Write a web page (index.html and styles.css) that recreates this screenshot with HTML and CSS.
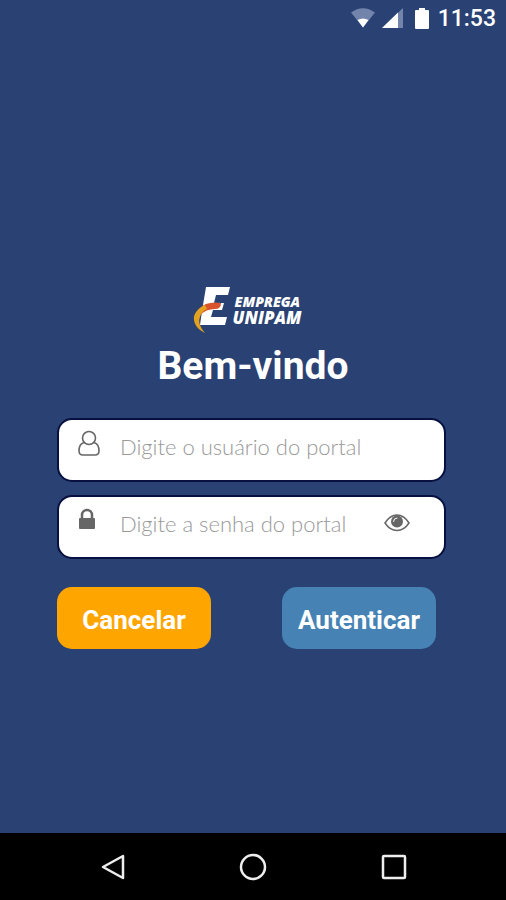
FILE: index.html
```html
<!DOCTYPE html>
<html lang="pt-BR">
<head>
<meta charset="utf-8">
<meta name="viewport" content="width=device-width, initial-scale=1">
<title>Emprega UNIPAM</title>
<link rel="stylesheet" href="styles.css">
</head>
<body>
<header class="status">
  <svg width="26" height="20" viewBox="0 0 26 20" aria-hidden="true">
    <path fill="#7284ab" d="M1 4.500Q13-4 25 4.500L13 19.500Z"/>
    <path fill="#fff" d="M7.500 12Q13 9 18.500 12L13 19.500Z"/>
  </svg>
  <svg width="22" height="20" viewBox="0 0 22 20" aria-hidden="true">
    <path fill="#7284ab" d="M0 20L21 0V20Z"/>
    <path fill="#fff" d="M0 20L16 4.500V20Z"/>
  </svg>
  <svg class="battery" width="14" height="21" viewBox="0 0 14 21" aria-hidden="true">
    <path fill="#fff" d="M4 0H10V2H13Q14 2 14 3V20Q14 21 13 21H1Q0 21 0 20V3Q0 2 1 2H4Z"/>
  </svg>
  <time>11:53</time>
</header>

<main class="login">
  <div class="brand">
    <svg width="38" height="48" viewBox="0 0 38 48" aria-hidden="true">
      <path fill="#fff" d="M13 1H37L35 9H23L21 17H31L29 24H20L18 31H34L32 39H7L9 25Z"/>
      <path fill="#d9532c" d="M28 17Q28 23 22 23Q13 23 7 29L6 23Q13 15 28 17Z"/>
      <path fill="#e2a11f" d="M12 19C5 22 0 28 1 34C2 40 6 44 12 47C7 41 5 36 7 31C8 27 10 25 14 23Z"/>
    </svg>
    <p class="brand-name"><span class="brand-top">EMPREGA</span><span class="brand-bottom">UNIPAM</span></p>
  </div>
  <h1>Bem-vindo</h1>
  <form>
    <label class="field">
      <svg class="lead" width="22" height="28" viewBox="0 0 22 28" fill="none" stroke="#666" stroke-width="1.600" aria-hidden="true">
        <circle cx="11" cy="8" r="6.500"/>
        <path d="M6 12.500C2.500 13.500 1 17 1 21Q1 25 5 25H17Q21 25 21 21C21 17 19.500 13.500 16 12.500"/>
      </svg>
      <input type="text" placeholder="Digite o usuário do portal" aria-label="Usuário do portal">
    </label>
    <div class="field">
      <svg class="lead lock" width="18" height="28" viewBox="0 0 18 28" aria-hidden="true">
        <path fill="none" stroke="#666" stroke-width="2.500" d="M4 13V8A5 5 0 0 1 14 8V13"/>
        <rect x="1" y="11" width="16" height="11" rx="1" fill="#666"/>
      </svg>
      <input type="password" placeholder="Digite a senha do portal" aria-label="Senha do portal">
      <button class="reveal" type="button" aria-label="Mostrar senha">
        <svg width="26" height="18" viewBox="0 0 26 18" aria-hidden="true">
          <path fill="none" stroke="#666" stroke-width="1.500" d="M1 9Q6 1 13 1T25 9Q20 16.500 13 16.500T1 9Z"/>
          <circle cx="13" cy="7.500" r="6" fill="#666"/>
          <path fill="none" stroke="#fff" stroke-linecap="round" d="M9.500 7.500Q9.500 4 13 4"/>
        </svg>
      </button>
    </div>
    <div class="actions">
      <button class="btn cancel" type="button">Cancelar</button>
      <button class="btn submit" type="submit">Autenticar</button>
    </div>
  </form>
</main>

<nav class="system" aria-label="Sistema">
  <button type="button" aria-label="Voltar"><svg width="28" height="28" viewBox="0 0 28 28"><path d="M4 14L24 3V25Z"/></svg></button>
  <button type="button" aria-label="Início"><svg width="28" height="28" viewBox="0 0 28 28"><circle cx="14" cy="14" r="12"/></svg></button>
  <button type="button" aria-label="Recentes"><svg width="28" height="28" viewBox="0 0 28 28"><rect x="4" y="3" width="22" height="22" rx="1"/></svg></button>
</nav>
</body>
</html>
```
FILE: styles.css
```css
* { box-sizing: border-box; }

body {
  margin: 0;
  min-height: 100vh;
  display: flex;
  flex-direction: column;
  background: #294173;
  color: #fff;
  font-family: Roboto, "Liberation Sans", sans-serif;
}

button {
  padding: 0;
  border: 0;
  background: none;
  color: inherit;
  font: inherit;
}

svg { display: block; flex: none; }

.status {
  display: flex;
  justify-content: flex-end;
  align-items: center;
  gap: 6px;
  height: 38px;
  padding-right: 10px;
}

.status svg { margin-bottom: 2px; }
.status .battery { margin: 0 3px 2px 5px; }

.status time {
  font-size: 23px;
  font-weight: 500;
  line-height: 28px;
}

.login {
  flex: 1;
  display: flex;
  flex-direction: column;
  justify-content: center;
  padding: 64px 57px 0;
}

.brand {
  display: flex;
  justify-content: center;
  gap: 2px;
  padding-right: 12px;
}

.brand-name {
  display: flex;
  flex-direction: column;
  margin: 0;
  padding-top: 8px;
  font-family: "Open Sans", "Noto Sans", sans-serif;
  font-style: italic;
  font-weight: 800;
}

.brand-top { padding-left: 2px; font-size: 14px; line-height: 16px; }
.brand-bottom { font-size: 17px; line-height: 16px; }

h1 {
  margin: 8px 0 28px;
  font-size: 39px;
  font-weight: 700;
  line-height: 48px;
  text-align: center;
}

form { margin-right: 3px; }

.field {
  display: flex;
  align-items: flex-start;
  height: 64px;
  margin-bottom: 13px;
  padding: 10px 34px 0 19px;
  border: 2px solid #07103f;
  border-radius: 15px;
  background: #fff;
}

.field .lead { margin-right: 20px; }
.field .lock { margin-right: 24px; }

.field input {
  flex: 1;
  min-width: 0;
  height: 32px;
  padding: 0;
  border: 0;
  outline: 0;
  background: transparent;
  color: #444;
  font-family: Lato, Inter, sans-serif;
  font-size: 22px;
  font-weight: 300;
}

.field input::placeholder { color: #999; opacity: 1; }

.reveal { padding-top: 7px; }

.actions {
  display: flex;
  justify-content: space-between;
  margin-top: 28px;
  padding-right: 10px;
}

.btn {
  width: 154px;
  height: 62px;
  padding-top: 3px;
  border-radius: 15px;
  font-size: 26px;
  font-weight: 700;
  line-height: 32px;
}

.cancel { background: #ffa500; }
.submit { background: #4682b4; }

.system {
  display: grid;
  grid-template-columns: repeat(3, 140px);
  justify-content: center;
  height: 67px;
  background: #000;
}

.system button { display: grid; place-items: center; }
.system svg { fill: none; stroke: #eee; stroke-width: 2.5; stroke-linejoin: round; }
```
